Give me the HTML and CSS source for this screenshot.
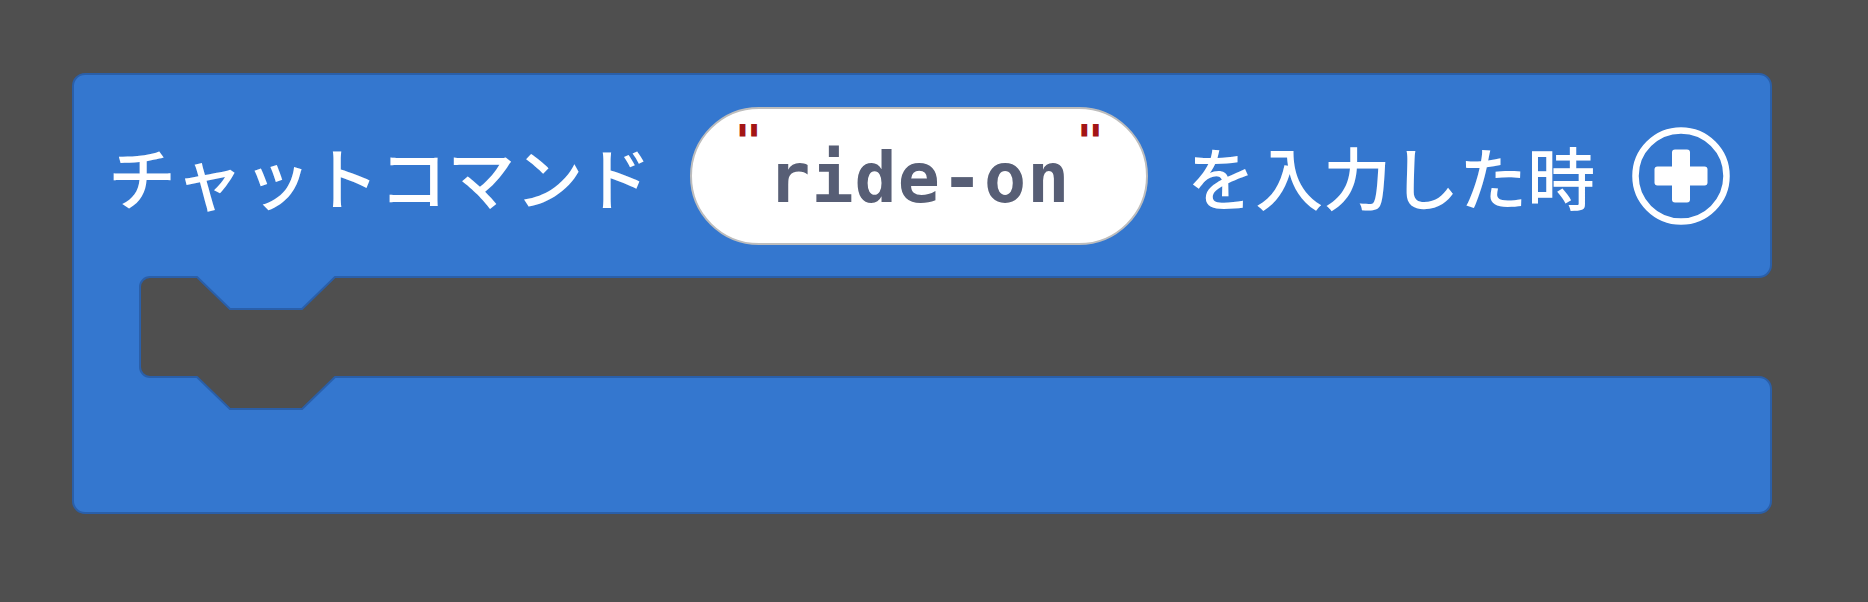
FILE: index.html
```html
<!DOCTYPE html>
<html lang="ja">

<head>
  <meta charset="UTF-8" />
  <title>Chat command block</title>
  <link rel="stylesheet" href="styles.css">
</head>

<body>
  <div class="workspace">
    <div class="block">
      <!-- block outline, drawn like the editor does -->
      <svg class="block-shape" width="1700" height="441" viewBox="0 0 1700 441">
        <path d="M 1 13 A 12 12 0 0 1 13 1 H 1687 A 12 12 0 0 1 1699 13 V 192 A 12 12 0 0 1 1687 204
                 H 263 L 230 236 H 158 L 125 204 H 78 A 10 10 0 0 0 68 214 V 294 A 10 10 0 0 0 78 304
                 H 125 L 158 336 H 230 L 263 304 H 1687 A 12 12 0 0 1 1699 316 V 428 A 12 12 0 0 1 1687 440
                 H 13 A 12 12 0 0 1 1 428 Z" />
      </svg>

      <div class="block-head">
        <span class="label">チャットコマンド</span>
        <div class="string-field">
          <span class="quote">"</span>
          <span class="value">ride-on</span>
          <span class="quote">"</span>
        </div>
        <span class="label">を入力した時</span>
        <svg class="add-icon" width="98" height="98" viewBox="0 0 98 98">
          <circle cx="49" cy="49" r="45.5" />
          <rect x="22.5" y="39.5" width="53" height="19" rx="3" />
          <rect x="40" y="22.5" width="18" height="53" rx="3" />
        </svg>
      </div>
      <div class="block-mouth"></div>
      <div class="block-foot"></div>
    </div>
  </div>
</body>

</html>
```

FILE: styles.css
```css
body {
  margin: 0;
  height: 100vh;
  background: #4f4f4f;
  overflow: hidden;
}

.workspace {
  padding: 73px 0 0 72px;
}

.block {
  position: relative;
  width: 1700px;
  height: 441px;
}

.block-shape {
  position: absolute;
  top: 0;
  left: 0;
}

.block-shape path {
  fill: #3477cf;
  stroke: #2a5fa9;
  stroke-width: 2;
  stroke-linejoin: round;
}

.block-head {
  position: relative;
  height: 205px;
  display: flex;
  align-items: center;
  gap: 39px;
  padding-left: 36px;
}

.label {
  font-family: "Noto Sans CJK JP", sans-serif;
  font-size: 68px;
  font-weight: 500;
  line-height: 1;
  color: #ffffff;
  white-space: nowrap;
}

.string-field {
  width: 458px;
  height: 138px;
  box-sizing: border-box;
  border: 2px solid #bdbdbd;
  border-radius: 69px;
  background: #ffffff;
  display: flex;
  justify-content: center;
  align-items: center;
  gap: 6px;
  font-family: "DejaVu Sans Mono", monospace;
  font-weight: bold;
}

.quote {
  align-self: flex-start;
  margin-top: 10px;
  font-size: 46px;
  line-height: 1;
  color: #a31515;
}

.value {
  font-size: 70px;
  line-height: 1;
  letter-spacing: 1px;
  padding-top: 4px;
  color: #575e75;
}

.add-icon {
  margin-left: -2px;
}

.add-icon circle {
  fill: none;
  stroke: #ffffff;
  stroke-width: 6.5;
}

.add-icon rect {
  fill: #ffffff;
}

.block-mouth {
  height: 100px;
}

.block-foot {
  height: 136px;
}
```
